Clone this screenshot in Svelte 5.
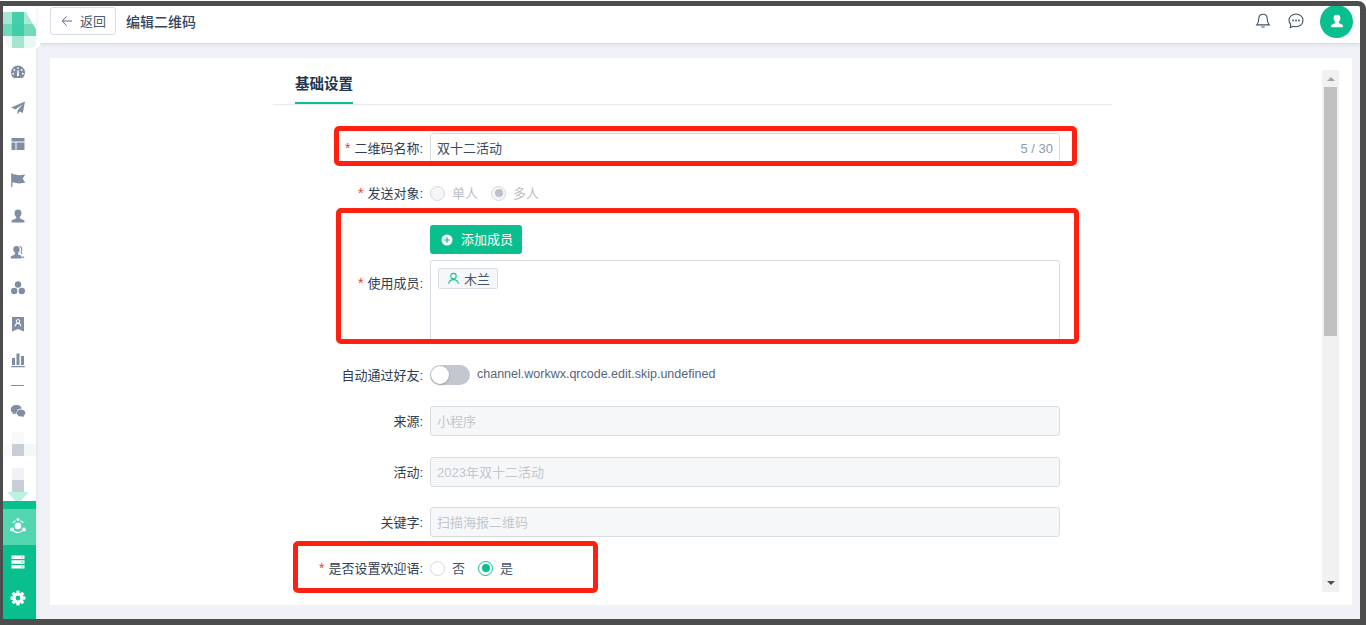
<script>
  let radioWelcome = "yes";
  let autoPass = false;
</script>

<div class="frame">
  <aside class="sidebar">
    <div class="logo">
      <svg width="33" height="48" viewBox="0 0 33 48">
        <rect x="0" y="6" width="9" height="12" fill="#a8e6d4" />
        <rect x="9" y="6" width="12" height="12" fill="#43cfa9" />
        <path d="M21 6h2l7 12h-9z" fill="#afe8d7" />
        <rect x="0" y="18" width="9" height="12" fill="#6fd9bc" />
        <rect x="9" y="18" width="12" height="12" fill="#3fcea8" />
        <path d="M21 18h9l3 5v7H21z" fill="#74dabe" />
        <path d="M0 30h9v12H6z" fill="#edfaf6" />
        <rect x="9" y="30" width="12" height="12" fill="#a5e6d3" />
        <path d="M21 30h12v10l-5 2h-7z" fill="#e9f8f4" />
        <path d="M33 32l5 7-5 4z" fill="#fff" />
      </svg>
    </div>
    <nav class="nav">
      <div class="nav-item">
        <svg width="16" height="16" viewBox="0 0 16 16"><path fill-rule="evenodd" d="M8 1.500a7 7 0 0 0-7 7c0 2.200 1 4.200 2.600 5.500h8.800A7 7 0 0 0 15 8.500a7 7 0 0 0-7-7zM8 3.200a.9.9 0 1 1 0 1.800.9.9 0 0 1 0-1.800zM4.300 5a.9.9 0 1 1 0 1.800.9.9 0 0 1 0-1.800zM11.700 5a.9.9 0 1 1 0 1.800.9.9 0 0 1 0-1.800zM3.200 8.800a.9.9 0 1 1 0 1.800.9.9 0 0 1 0-1.800zM12.800 8.800a.9.9 0 1 1 0 1.800.9.9 0 0 1 0-1.800zM7.500 6h1l.5 5.200a1 1 0 0 1-2 0z" /></svg>
      </div>
      <div class="nav-item">
        <svg width="16" height="16" viewBox="0 0 16 16"><path d="M15 1.500 1 7.500l4.500 2 7-5-5 6v4l2.300-3 3 1.500z" /></svg>
      </div>
      <div class="nav-item">
        <svg width="16" height="16" viewBox="0 0 16 16"><path d="M1.500 2h13v3.500h-13zM1.500 6.500h4V14h-4zM6.500 6.500h8V14h-8z" /></svg>
      </div>
      <div class="nav-item">
        <svg width="16" height="16" viewBox="0 0 16 16"><path d="M1.200 1.200h1.300V15H1.200zM2.500 2 9 3.200l6.200-.7-2.500 3.900 2.500 4.300-6.200.7-6.500-1.200z" /></svg>
      </div>
      <div class="nav-item">
        <svg width="16" height="16" viewBox="0 0 16 16"><path d="M8 1.500A3.500 3.500 0 0 1 11.500 5c0 2-1 3.300-1.800 4v1.300l4.800 2.200v2h-13v-2l4.800-2.200V9C5.500 8.300 4.500 7 4.500 5A3.500 3.500 0 0 1 8 1.500z" /></svg>
      </div>
      <div class="nav-item">
        <svg width="16" height="16" viewBox="0 0 16 16"><path d="M6.500 2A3.200 3.200 0 0 1 9.700 5.200c0 1.800-.9 3-1.600 3.700v1.400l3 1.400.6 2.800H.8v-2l4.300-2.200V8.900C4.300 8.200 3.300 7 3.300 5.200A3.200 3.200 0 0 1 6.500 2z" /><path d="M9.800 2.200c2 .9 2.500 3 1.500 5.200-.4.900 0 1.900 1 2.500M13.800 12.500a1 1 0 1 1-2 0" fill="none" stroke="#7f8ea3" stroke-width="1.100" /></svg>
      </div>
      <div class="nav-item">
        <svg width="16" height="16" viewBox="0 0 16 16"><circle cx="8" cy="4.500" r="3.200" /><circle cx="4.200" cy="11" r="3.200" /><circle cx="11.800" cy="11" r="3.200" /></svg>
      </div>
      <div class="nav-item">
        <svg width="16" height="16" viewBox="0 0 16 16"><path fill-rule="evenodd" d="M2 1h12v14.500l-6-2.500-6 2.500zM8 3a2.200 2.200 0 0 0-1.300 4C5.400 7.600 4.500 9 4.500 10.500h1C5.500 9 6.600 7.900 8 7.900s2.500 1.100 2.500 2.600h1c0-1.500-.9-2.900-2.200-3.500A2.200 2.200 0 0 0 8 3zm0 1a1.200 1.200 0 1 1 0 2.400A1.200 1.200 0 0 1 8 4z" /></svg>
      </div>
      <div class="nav-item">
        <svg width="16" height="16" viewBox="0 0 16 16"><path d="M2 6h3v7H2zM6.500 1.500h3V13h-3zM11 4h3v9h-3zM1.200 14h13.600v1.200H1.200z" /></svg>
      </div>
      <div class="nav-dash"></div>
      <div class="nav-item">
        <svg width="16" height="16" viewBox="0 0 16 16"><path d="M6.200 2C3 2 .8 4 .8 6.400c0 1.400.8 2.600 2 3.400l-.4 1.600 1.800-1c.6.200 1.200.3 1.800.3l.5-.1a4 4 0 0 1 4.100-4.900c.3 0 .6 0 .9.100C11.900 3.600 9.400 2 6.200 2z" /><path d="M11 6.600c-2.500 0-4.300 1.600-4.300 3.500s1.800 3.500 4.300 3.500c.5 0 1-.1 1.500-.2l1.500.9-.4-1.400c1-.7 1.700-1.700 1.700-2.800 0-1.900-1.800-3.500-4.300-3.500z" /></svg>
      </div>
    </nav>
    <div class="mosaic">
      <svg width="33" height="72" viewBox="0 0 33 72">
        <rect x="9" y="3" width="12" height="12" fill="#f9f9fa" />
        <rect x="0" y="15" width="9" height="12" fill="#fbfbfc" />
        <rect x="9" y="15" width="12" height="12" fill="#c8ced8" />
        <rect x="21" y="15" width="12" height="12" fill="#f5f6f8" />
        <rect x="9" y="39" width="12" height="12" fill="#f1f2f5" />
        <rect x="9" y="51" width="12" height="12" fill="#c8ced8" />
        <path d="M4 63h22l-3 3-5 6h-6l-5-6z" fill="#bff0e0" />
      </svg>
    </div>
    <div class="nav-bottom">
      <div class="nav-item active">
        <svg width="18" height="18" viewBox="0 0 18 18"><circle cx="9" cy="9" r="3.300" fill="#fff" /><path d="M3.700 6a6 6 0 0 1 3-2.300M11.300 3.700A6 6 0 0 1 14.300 6M14 13a6 6 0 0 1-10 0" fill="none" stroke="#fff" stroke-width="1.200" /><circle cx="9" cy="2.500" r="1.500" fill="#fff" /><circle cx="3" cy="12.500" r="1.900" fill="#fff" /><circle cx="15" cy="12.500" r="1.900" fill="#fff" /></svg>
      </div>
      <div class="nav-item">
        <svg width="16" height="16" viewBox="0 0 16 16"><path fill-rule="evenodd" fill="#fff" d="M1.500 1.500h13v3.500h-13zM11.500 2.700v1.100h1.300V2.700zM1.500 6.200h13v3.500h-13zM11.500 7.400v1.100h1.300V7.400zM1.500 11h13v3.500h-13zM11.500 12.200v1.100h1.300v-1.100z" /></svg>
      </div>
      <div class="nav-item">
        <svg width="16" height="16" viewBox="0 0 16 16">
          <circle cx="8" cy="8" r="5.600" fill="#fff" />
          {#each [0, 45, 90, 135] as a}
            <rect x="6.400" y=".6" width="3.200" height="14.800" fill="#fff" transform="rotate({a} 8 8)" />
          {/each}
          <circle cx="8" cy="8" r="2.400" fill="#0abf8e" />
        </svg>
      </div>
    </div>
  </aside>

  <div class="main">
    <header class="topbar">
      <button class="back">
        <svg width="12" height="12" viewBox="0 0 12 12"><path d="M5.500 1.500 1.200 6l4.300 4.500M1.500 6H11" fill="none" stroke="#5b6b80" stroke-width="1" /></svg>
        <span class="txt">返回</span>
      </button>
      <span class="page-title">编辑二维码</span>
      <div class="top-right">
        <svg width="16" height="16" viewBox="0 0 16 16"><path d="M8 1.200c-2.600 0-4.200 1.900-4.200 4.400 0 3.500-.8 5-2 6.300h12.400c-1.200-1.300-2-2.800-2-6.300 0-2.500-1.600-4.400-4.200-4.400zM6.300 14h3.400" fill="none" stroke="#3f5068" stroke-width="1.100" /></svg>
        <svg width="16" height="16" viewBox="0 0 16 16"><path d="M8 1C4.100 1 1 3.700 1 7.300c0 1.600.6 3 1.700 4.100l-.4 3.200 3.100-1.300c.8.200 1.700.4 2.600.4 3.900 0 7-2.800 7-6.400S11.900 1 8 1z" fill="none" stroke="#3f5068" stroke-width="1.100" /><circle cx="5" cy="7.500" r=".9" fill="#3f5068" /><circle cx="8" cy="7.500" r=".9" fill="#3f5068" /><circle cx="11" cy="7.500" r=".9" fill="#3f5068" /></svg>
        <div class="avatar">
          <svg width="14" height="14" viewBox="0 0 16 16"><path fill="#fff" d="M8 .8a3.900 3.900 0 0 1 3.900 3.900c0 2-1 3.500-1.900 4.300v1.300l4.700 2.200V15H1.300v-2.500L6 10.300V9C5.100 8.200 4.100 6.700 4.100 4.700A3.900 3.900 0 0 1 8 .8z" /></svg>
        </div>
      </div>
    </header>

    <div class="content">
      <section class="card">
        <div class="form">
          <div class="tabs"><div class="tab">基础设置</div></div>

          <div class="row r-name">
            <label class="label req">二维码名称:</label>
            <div class="input">
              <span>双十二活动</span>
              <span class="count">5 / 30</span>
            </div>
          </div>

          <div class="row r-target">
            <label class="label req">发送对象:</label>
            <div class="radios">
              <span class="radio disabled"><i></i><span class="txt">单人</span></span>
              <span class="radio disabled checked"><i></i><span class="txt">多人</span></span>
            </div>
          </div>

          <div class="row r-members">
            <label class="label req">使用成员:</label>
            <div class="members">
              <button class="add">
                <svg width="12" height="12" viewBox="0 0 12 12"><circle cx="6" cy="6" r="5.500" fill="#fff" /><path d="M6 3.300v5.400M3.300 6h5.400" stroke="#0abf8e" stroke-width="1.200" /></svg>
                <span class="txt">添加成员</span>
              </button>
              <div class="member-box">
                <span class="tag">
                  <svg width="13" height="13" viewBox="0 0 12 12"><circle cx="6" cy="3.800" r="2.500" fill="none" stroke="#1cc096" /><path d="M1.500 11c.3-2.600 2.100-4 4.500-4s4.200 1.400 4.500 4" fill="none" stroke="#1cc096" /></svg>
                  木兰
                </span>
              </div>
            </div>
          </div>

          <div class="row r-switch">
            <label class="label">自动通过好友:</label>
            <span class="switch" class:on={autoPass}><i></i></span>
            <span class="hint">channel.workwx.qrcode.edit.skip.undefined</span>
          </div>

          <div class="row r-field">
            <label class="label">来源:</label>
            <div class="input off">小程序</div>
          </div>
          <div class="row r-field">
            <label class="label">活动:</label>
            <div class="input off">2023年双十二活动</div>
          </div>
          <div class="row r-field r-last">
            <label class="label">关键字:</label>
            <div class="input off">扫描海报二维码</div>
          </div>

          <div class="row r-welcome">
            <label class="label req">是否设置欢迎语:</label>
            <div class="radios">
              <span class="radio" class:checked={radioWelcome === "no"}><i></i><span class="txt">否</span></span>
              <span class="radio" class:checked={radioWelcome === "yes"}><i></i><span class="txt">是</span></span>
            </div>
          </div>

          <div class="mark m1"></div>
          <div class="mark m2"></div>
          <div class="mark m3"></div>
        </div>

        <div class="scrollbar">
          <span class="arrow up"></span>
          <div class="thumb"></div>
          <span class="arrow down"></span>
        </div>
      </section>
    </div>
  </div>
</div>

<style>
  :global(body) {
    margin: 0;
    background: #fff;
    overflow: hidden;
  }

  .frame {
    display: flex;
    box-sizing: border-box;
    width: 1366px;
    height: 624px;
    margin-top: 1px;
    border: solid #4d4d4d;
    border-width: 5px 6px 6px 3px;
    border-top-right-radius: 8px;
    background: #f0f2f7;
    font-family: "Liberation Sans", "Noto Sans CJK SC", sans-serif;
    font-size: 13px;
    color: #2f3e52;
    overflow: hidden;
  }

  .txt {
    padding-bottom: 2px;
  }

  .sidebar {
    display: flex;
    flex-direction: column;
    flex: 0 0 33px;
    background: #fff;
    box-shadow: 1px 0 3px rgba(60, 70, 90, 0.08);
    z-index: 2;
  }
  .logo {
    height: 48px;
  }
  .logo svg,
  .mosaic svg {
    display: block;
    overflow: visible;
  }
  .nav-item {
    display: flex;
    align-items: center;
    justify-content: center;
    box-sizing: border-box;
    height: 36px;
    padding-right: 3px;
  }
  .nav-item svg {
    fill: #7f8ea3;
  }
  .nav-dash {
    height: 1px;
    margin: 7px 12px 7px 8px;
    background: #7f8ea3;
  }
  .mosaic {
    height: 72px;
  }
  .nav-bottom {
    flex: 1;
    padding-top: 8px;
    background: #0abf8e;
  }
  .nav-bottom .nav-item {
    padding-bottom: 2px;
  }
  .nav-bottom .active {
    background: #52d6af;
  }

  .main {
    display: flex;
    flex-direction: column;
    flex: 1;
    min-width: 0;
  }

  .topbar {
    display: flex;
    align-items: center;
    flex: 0 0 37px;
    box-sizing: border-box;
    padding: 0 0 7px 14px;
    background: #fff;
    box-shadow: 0 1px 4px rgba(60, 70, 90, 0.18);
    z-index: 1;
  }
  .back {
    display: flex;
    align-items: center;
    gap: 7px;
    box-sizing: border-box;
    width: 66px;
    height: 28px;
    padding: 0 0 0 10px;
    border: 1px solid #d9dee6;
    border-radius: 3px;
    background: #fff;
    color: #4a5b72;
    font: inherit;
  }
  .page-title {
    margin-left: 10px;
    font-size: 14px;
    font-weight: 500;
    color: #33475f;
  }
  .top-right {
    display: flex;
    align-items: center;
    margin-left: auto;
    padding-right: 7px;
  }
  .top-right > svg {
    margin-right: 17px;
  }
  .top-right > svg + svg {
    margin-right: 16px;
  }
  .avatar {
    display: flex;
    align-items: center;
    justify-content: center;
    width: 33px;
    height: 33px;
    margin: -2px 0;
    border-radius: 50%;
    background: #0abf8e;
  }

  .content {
    flex: 1;
    min-height: 0;
    padding: 15px 8px 14px 14px;
  }
  .card {
    display: flex;
    height: 100%;
    padding-left: 223px;
    box-sizing: border-box;
    background: #fff;
  }

  .form {
    position: relative;
    width: 839px;
  }
  .tabs {
    height: 46px;
    padding-left: 22px;
    border-bottom: 1px solid #e6e9ee;
  }
  .tab {
    width: 58px;
    height: 46px;
    box-sizing: border-box;
    border-bottom: 2px solid #0abf8e;
    font-size: 14.500px;
    font-weight: 700;
    line-height: 53px;
    text-align: center;
    color: #22364d;
  }

  .row {
    display: flex;
    align-items: center;
  }
  .label {
    flex: 0 0 150px;
    margin-right: 7px;
    padding-bottom: 2px;
    text-align: right;
    color: #2f3e52;
  }
  .req::before {
    content: "*";
    margin-right: 4px;
    font-size: 14px;
    color: #f5391c;
  }

  .r-name {
    margin-top: 28px;
  }
  .r-target {
    margin-top: 20px;
    height: 20px;
  }
  .r-members {
    margin-top: 22px;
  }
  .r-switch {
    margin-top: 24px;
    height: 20px;
  }
  .r-field {
    margin-top: 21px;
  }
  .r-last {
    margin-top: 20px;
  }
  .r-welcome {
    margin-top: 21px;
    height: 20px;
  }

  .input {
    position: relative;
    box-sizing: border-box;
    width: 630px;
    height: 30px;
    padding: 0 6px;
    border: 1px solid #d8dde4;
    border-radius: 3px;
    line-height: 29px;
    color: #3b4a5e;
  }
  .input.off {
    background: #f6f7f8;
    color: #c2c7cf;
  }
  .count {
    position: absolute;
    right: 6px;
    top: 0;
    color: #8c9bb0;
  }

  .radios {
    display: flex;
    gap: 13px;
  }
  .radio {
    display: flex;
    align-items: center;
    gap: 7px;
    color: #45556b;
  }
  .radio i {
    position: relative;
    box-sizing: border-box;
    width: 15px;
    height: 15px;
    border: 1px solid #d3d8df;
    border-radius: 50%;
    background: #fff;
  }
  .radio.disabled {
    color: #b9bfc8;
  }
  .radio.disabled i {
    background: #f5f6f7;
  }
  .radio.checked i {
    border-color: #0abf8e;
  }
  .radio.checked i::after {
    content: "";
    position: absolute;
    inset: 2.500px;
    border-radius: 50%;
    background: #0abf8e;
  }
  .radio.disabled.checked i {
    border-color: #d3d8df;
  }
  .radio.disabled.checked i::after {
    background: #bcc1c9;
  }

  .members {
    display: flex;
    flex-direction: column;
    align-items: flex-start;
    gap: 6px;
  }
  .add {
    display: flex;
    align-items: center;
    gap: 8px;
    box-sizing: border-box;
    width: 92px;
    height: 29px;
    padding: 0 0 0 11px;
    border: 0;
    border-radius: 3px;
    background: #0abf8e;
    color: #fff;
    font: inherit;
  }
  .member-box {
    box-sizing: border-box;
    width: 630px;
    height: 81px;
    padding: 7px;
    border: 1px solid #d8dde4;
    border-radius: 3px;
  }
  .tag {
    display: inline-flex;
    align-items: center;
    gap: 4px;
    box-sizing: border-box;
    width: 60px;
    height: 21px;
    padding-left: 8px;
    border: 1px solid #dadfe5;
    border-radius: 2px;
    background: #f6f7f8;
    color: #45556b;
  }

  .switch {
    position: relative;
    width: 40px;
    height: 20px;
    border-radius: 10px;
    background: #c3c7cf;
  }
  .switch i {
    position: absolute;
    top: 1px;
    left: 1px;
    width: 18px;
    height: 18px;
    border-radius: 50%;
    background: #fff;
    box-shadow: 0 1px 2px rgba(0, 0, 0, 0.25);
  }
  .hint {
    margin-left: 7px;
    padding-bottom: 2px;
    font-size: 12.500px;
    color: #55657a;
  }

  .mark {
    position: absolute;
    box-sizing: border-box;
    border: 5px solid #ff2012;
    border-radius: 5px;
  }
  .m1 {
    left: 61px;
    top: 68px;
    width: 743px;
    height: 40px;
  }
  .m2 {
    left: 63px;
    top: 150px;
    width: 743px;
    height: 136px;
  }
  .m3 {
    left: 20px;
    top: 483px;
    width: 305px;
    height: 52px;
  }

  .scrollbar {
    position: relative;
    flex: 0 0 17px;
    margin: 12px 0 13px 210px;
    background: #f1f1f1;
  }
  .thumb {
    position: absolute;
    left: 2px;
    top: 17px;
    width: 13px;
    height: 249px;
    background: #c1c1c1;
  }
  .arrow {
    position: absolute;
    left: 5px;
    border: solid transparent;
    border-width: 0 4px;
  }
  .arrow.up {
    top: 7px;
    border-bottom: 4px solid #a3a3a3;
  }
  .arrow.down {
    bottom: 7px;
    border-top: 4px solid #505050;
  }
</style>
